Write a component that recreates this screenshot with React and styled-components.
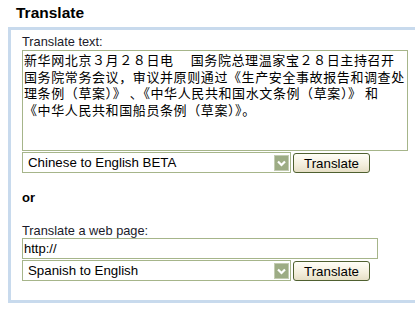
import React from "react";
import styled, { createGlobalStyle } from "styled-components";

const Global = createGlobalStyle`
  html, body { margin: 0; padding: 0; background: #fff; overflow: hidden; }
  body { font-family: "Liberation Sans", Arial, sans-serif; color: #111; }
`;

const Page = styled.div`
  width: 415px;
  height: 312px;
  overflow: hidden;
`;

const Title = styled.h2`
  margin: 0 0 5px 16px;
  padding-top: 4px;
  font-size: 15.5px;
  line-height: 18px;
  font-weight: bold;
  color: #000;
`;

const Panel = styled.div`
  margin-left: 8px;
  width: 430px;
  border: 3px solid #c8daed;
  border-right: none;
  padding: 4px 0 19px 11px;
  display: flex;
  flex-direction: column;
  align-items: flex-start;
  box-sizing: border-box;
`;

const Label = styled.label`
  display: block;
  font-size: 12.8px;
  line-height: 15px;
  color: #1a1a2a;
  margin-top: ${(p) => p.$top || 0}px;
`;

const TextArea = styled.textarea`
  display: block;
  box-sizing: border-box;
  width: 386px;
  height: 101px;
  margin: 1px 0 0 0;
  padding: 1px 1px;
  border: 1px solid #a6b58a;
  font-family: "Noto Sans CJK SC", "Liberation Sans", sans-serif;
  font-size: 13px;
  letter-spacing: 0.6px;
  line-height: 16.7px;
  color: #000;
  resize: none;
  overflow: hidden;
  white-space: pre;
  outline: none;
`;

const Row = styled.div`
  display: flex;
  align-items: flex-end;
  gap: 2px;
  margin-top: 1px;
`;

const SelectWrap = styled.div`
  position: relative;
  width: 269px;
  height: 21px;
`;

const Select = styled.select`
  appearance: none;
  -webkit-appearance: none;
  box-sizing: border-box;
  width: 100%;
  height: 100%;
  margin: 0;
  padding: 0 0 0 5px;
  border: 1px solid #a6b58a;
  border-radius: 0;
  background: #fff;
  font-family: "Liberation Sans", Arial, sans-serif;
  font-size: 13.3px;
  color: #000;
  outline: none;
`;

const ArrowBox = styled.span`
  position: absolute;
  right: 2px;
  top: 3px;
  width: 15px;
  height: 16px;
  pointer-events: none;
  display: block;
`;

const Button = styled.button`
  box-sizing: border-box;
  width: 77px;
  height: 20px;
  margin: 0;
  padding: 0;
  border: 1px solid #4f6030;
  border-radius: 3px;
  background: linear-gradient(#fffef8, #f3eedc 60%, #e6dfc6);
  font-family: "Liberation Sans", Arial, sans-serif;
  font-size: 13.3px;
  color: #000;
  cursor: pointer;
`;

const Or = styled.div`
  margin-top: 17px;
  font-size: 13px;
  line-height: 15px;
  font-weight: bold;
  color: #000;
`;

const UrlInput = styled.input`
  box-sizing: border-box;
  width: 356px;
  height: 21px;
  margin: 0;
  padding: 0 1px;
  border: 1px solid #a6b58a;
  font-family: "Liberation Sans", Arial, sans-serif;
  font-size: 13px;
  color: #000;
  outline: none;
`;

function Arrow() {
  return (
    <ArrowBox>
      <svg width="15" height="16" viewBox="0 0 15 16">
        <rect x="0.5" y="0.5" width="14" height="15" fill="#9dac85" stroke="#c3ccb2" />
        <polyline points="4,6.5 7.5,10 11,6.5" fill="none" stroke="#fff" strokeWidth="2.2" />
      </svg>
    </ArrowBox>
  );
}

function LangSelect({ value }) {
  return (
    <SelectWrap>
      <Select defaultValue={value}>
        <option>{value}</option>
      </Select>
      <Arrow />
    </SelectWrap>
  );
}

const chinese =
  "新华网北京３月２８日电　 国务院总理温家宝２８日主持召开\n" +
  "国务院常务会议，审议并原则通过《生产安全事故报告和调查处\n" +
  "理条例（草案）》 、《中华人民共和国水文条例（草案）》 和\n" +
  "《中华人民共和国船员条例（草案）》。";

export default function App() {
  return (
    <Page>
      <Global />
      <Title>Translate</Title>
      <Panel>
        <Label>Translate text:</Label>
        <TextArea defaultValue={chinese} spellCheck={false} />
        <Row>
          <LangSelect value="Chinese to English BETA" />
          <Button>Translate</Button>
        </Row>
        <Or>or</Or>
        <Label $top={18}>Translate a web page:</Label>
        <UrlInput defaultValue="http://" spellCheck={false} />
        <Row>
          <LangSelect value="Spanish to English" />
          <Button>Translate</Button>
        </Row>
      </Panel>
    </Page>
  );
}
